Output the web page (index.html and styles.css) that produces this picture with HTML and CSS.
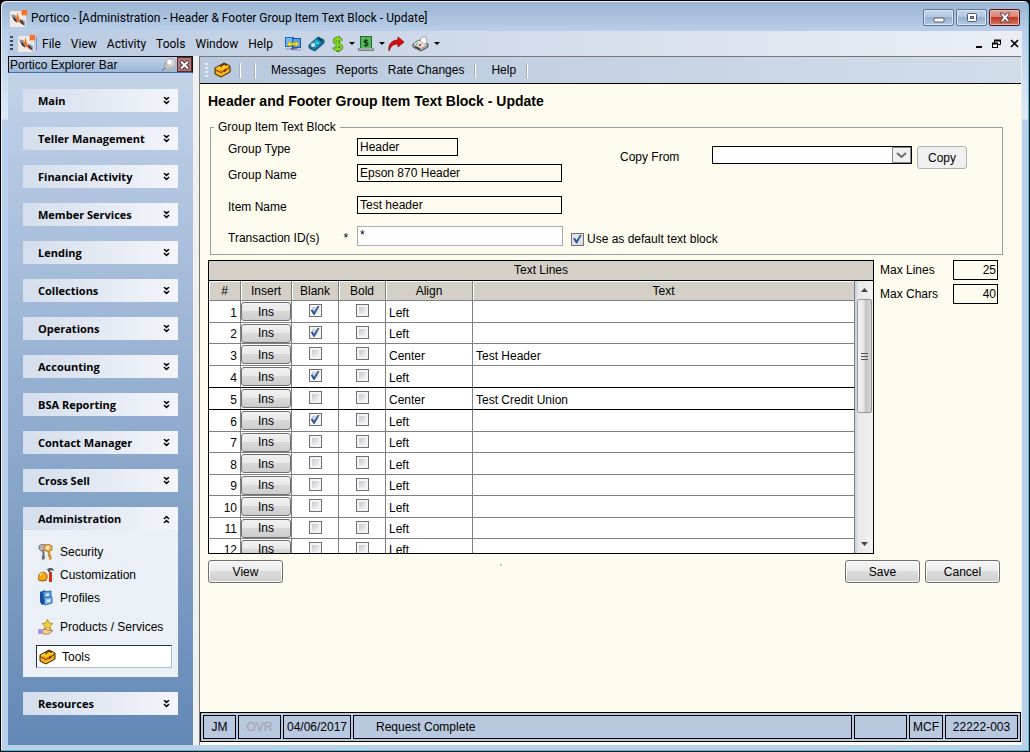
FILE: index.html
```html
<!DOCTYPE html>
<html lang="en">
<head>
<meta charset="utf-8">
<title>Portico</title>
<link rel="stylesheet" href="styles.css">
</head>
<body>
<svg class="defs" aria-hidden="true">
  <symbol id="logo" viewBox="0 0 16 16">
    <rect x="0" y="1" width="15" height="15" rx="1" fill="#efe9e7"/>
    <path d="M1 4l4 1 2 3-1 2-3-2zM9 8l5 2v4l-4-1z" fill="#8b8f99"/>
    <path d="M2 6l4 3 1 3-3-2zM9 9l3 2 2 4-4-3z" fill="#2c303a"/>
    <path d="M7 2l1 4 1 4 3 4-4-3-1 0-3-4 2 1z" fill="#f36a1c"/>
    <rect x="11" y="0" width="5" height="5" fill="#f9701e"/>
  </symbol>
  <symbol id="toolbox" viewBox="0 0 17 16">
    <path d="M1 6l9-5 6 3v6l-9 5-6-3z" fill="#f5a50f" stroke="#3a2300"/>
    <path d="M2 6l8-4 5 2-8 4z" fill="#ffcb32"/>
    <path d="M1.500 8l5.500 2.500 8.500-5" fill="none" stroke="#6b3d00"/>
    <path d="M7 5.500V4l4-2 1 .5V4" fill="none" stroke="#5a3200" stroke-width="1.300"/>
    <path d="M2 10.500l5 2.500M8 13l7-4" stroke="#ffbe2b"/>
    <path d="M10 8l2-1v2l-2 1z" fill="#4a2b00"/>
  </symbol>
  <symbol id="chev" viewBox="0 0 7 8">
    <path d="M1 0l2.500 2.500L6 0M1 4l2.500 2.500L6 4" fill="none" stroke="#000" stroke-width="1.500"/>
  </symbol>
</svg>
<div class="window">
  <header class="titlebar">
    <svg class="ico16"><use href="#logo"/></svg>
    <span class="title">Portico - [Administration - Header &amp; Footer Group Item Text Block - Update]</span>
    <div class="winbtns">
      <button type="button" class="winbtn" aria-label="Minimize"><svg width="12" height="12" viewBox="0 0 12 12"><rect x="1" y="6" width="10" height="4" rx="1" fill="#fff" stroke="#4c5874"/></svg></button>
      <button type="button" class="winbtn" aria-label="Maximize"><svg width="12" height="12" viewBox="0 0 12 12"><rect x="1.500" y="1.500" width="9" height="8" rx="1" fill="#fff" stroke="#4c5874"/><rect x="4.500" y="4.500" width="3" height="2" fill="#8fa9cc" stroke="#4c5874"/></svg></button>
      <button type="button" class="winbtn close" aria-label="Close"><svg width="12" height="12" viewBox="0 0 12 12"><path d="M1 1h3l2 2.500L8 1h3L8 5.500 11 10H8L6 7.500 4 10H1l3-4.500z" fill="#fff" stroke="#5b3b46"/></svg></button>
    </div>
  </header>

  <nav class="menubar">
    <i class="grip dark"></i>
    <svg class="ico16"><use href="#logo"/></svg>
    <i class="menu-sep"></i>
    <button type="button">File</button>
    <button type="button">View</button>
    <button type="button">Activity</button>
    <button type="button">Tools</button>
    <button type="button">Window</button>
    <button type="button">Help</button>
    <div class="icons">
      <button type="button" aria-label="Transfer"><svg width="16" height="16" viewBox="0 0 16 16">
        <rect x=".5" y="1.500" width="8" height="9" fill="#69b5fa" stroke="#2465b8"/><rect x="7.500" y="2.500" width="8" height="9" fill="#4f9cf0" stroke="#24559c"/>
        <path d="M4 12h8v2H4z" fill="#6a5fb0"/><path d="M1 12h5v2H1zM9 13h7v2H9z" fill="#a9b0c8"/>
        <path d="M2 8l3.500-3v2h5V5L14 8l-3.500 3V9h-5v2z" fill="#ffe100" stroke="#b89b1c" stroke-width=".5"/></svg></button>
      <button type="button" aria-label="Calculator"><svg width="17" height="16" viewBox="0 0 17 16">
        <path d="M1 9l9-8 6 3v3l-9 8-6-3z" fill="#117297" stroke="#07516f"/><path d="M2 9l8-7 5 2-8 8z" fill="#1ba6cf"/>
        <path d="M9 3l2-1 4 2-2 2z" fill="#073c5c"/><circle cx="5" cy="9" r="2" fill="#f3d3ee"/><path d="M8 7l1-1M10 8l1-1" stroke="#b6ecfa"/></svg></button>
      <button type="button" aria-label="Cash"><svg width="12" height="16" viewBox="0 0 12 16">
        <path d="M9.500 5C8 2 2.500 2 2.500 5s7 3 7 6-6 3-8 0M6 0v16" fill="none" stroke="#4b7d17" stroke-width="3.500"/>
        <path d="M9.500 5C8 2 2.500 2 2.500 5s7 3 7 6-6 3-8 0M5.500 0v15" fill="none" stroke="#84d824" stroke-width="2"/></svg><i class="caret"></i></button>
      <button type="button" aria-label="Checks"><svg width="16" height="16" viewBox="0 0 16 16">
        <rect x="2.500" y=".5" width="11" height="12" fill="#58b55b" stroke="#246b32"/><path d="M0 12h16v3H0z" fill="#7b827f"/><path d="M1 13h14" stroke="#ccd1d1"/>
        <path d="M10 4.500H7.500Q6 4.500 6 5.500t2 1T10 8 8.500 9.500H6M8 3v8" fill="none" stroke="#063b12" stroke-width="1.200"/></svg><i class="caret"></i></button>
      <button type="button" aria-label="Forward"><svg width="17" height="16" viewBox="0 0 17 16">
        <path d="M1 15C0 8 4 4 10 4V1l6 5-6 5V8C5 8 3 10 1 15z" fill="#d90d12" stroke="#8b0709" stroke-width=".8"/></svg></button>
      <button type="button" aria-label="Print"><svg width="17" height="16" viewBox="0 0 17 16">
        <path d="M1 8l6-4 9 4v3l-7 4-8-4z" fill="#a9a9a4" stroke="#4e4e4e"/><path d="M1.500 8L7 4.500 15 8l-6 4z" fill="#e6e6e2"/>
        <path d="M8 5l2-4h4l1 6-3 1z" fill="#fff" stroke="#777" stroke-width=".6"/><path d="M3 10l5 2.500v1.500l-5-2.500z" fill="#333"/><path d="M4 8.500l2-1" stroke="#2b2"/><path d="M7 9.500l2-1" stroke="#e11" stroke-width="1.500"/></svg><i class="caret"></i></button>
    </div>
    <div class="mdi">
      <button type="button" aria-label="Minimize document"><svg width="8" height="10" viewBox="0 0 8 10"><path d="M1 8h6" stroke="#000" stroke-width="2"/></svg></button>
      <button type="button" aria-label="Restore document"><svg width="9" height="10" viewBox="0 0 9 10"><path d="M2.500 4V1.500h6v4H6" fill="none" stroke="#000"/><path d="M2 1.500h7" stroke="#000" stroke-width="2"/><rect x=".5" y="4.500" width="5" height="4" fill="#fff" stroke="#000"/><path d="M0 4.500h6" stroke="#000" stroke-width="2"/></svg></button>
      <button type="button" aria-label="Close document"><svg width="9" height="10" viewBox="0 0 9 10"><path d="M1 1l7 7M8 1L1 8" stroke="#000" stroke-width="1.700"/></svg></button>
    </div>
  </nav>

  <div class="workspace">
    <aside class="explorer">
      <div class="explorer-head">
        <span>Portico Explorer Bar</span>
        <svg width="15" height="14" viewBox="0 0 15 14"><path d="M1 13l4-4" stroke="#888" stroke-width="1.500"/><path d="M3 6l3-1 5 5-1 2q-6 0-7-6z" fill="#c9c9c9" stroke="#a2a2a2"/><circle cx="10" cy="5" r="4.500" fill="#d3d3d3" stroke="#b0b0b0"/><circle cx="8.500" cy="4" r="2.200" fill="#fff"/></svg>
        <button type="button" class="explorer-close" aria-label="Close explorer bar"><svg width="11" height="10" viewBox="0 0 11 10"><path d="M1.500 1l8 8M9.500 1l-8 8" stroke="#54363c" stroke-width="4"/><path d="M2 1.500l7 7M9 1.500l-7 7" stroke="#fff" stroke-width="2"/></svg></button>
      </div>
      <div class="groups">
        <button type="button" class="group">Main<svg><use href="#chev"/></svg></button>
        <button type="button" class="group">Teller Management<svg><use href="#chev"/></svg></button>
        <button type="button" class="group">Financial Activity<svg><use href="#chev"/></svg></button>
        <button type="button" class="group">Member Services<svg><use href="#chev"/></svg></button>
        <button type="button" class="group">Lending<svg><use href="#chev"/></svg></button>
        <button type="button" class="group">Collections<svg><use href="#chev"/></svg></button>
        <button type="button" class="group">Operations<svg><use href="#chev"/></svg></button>
        <button type="button" class="group">Accounting<svg><use href="#chev"/></svg></button>
        <button type="button" class="group">BSA Reporting<svg><use href="#chev"/></svg></button>
        <button type="button" class="group">Contact Manager<svg><use href="#chev"/></svg></button>
        <button type="button" class="group">Cross Sell<svg><use href="#chev"/></svg></button>
        <div class="open-group">
          <button type="button" class="group open">Administration<svg><use href="#chev"/></svg></button>
          <div class="links">
            <a href="#security"><svg viewBox="0 0 16 16"><path d="M5 5l1 10M6 12l-2 1M6 14l-2 1" stroke="#6c6c6c" stroke-width="2"/><path d="M1 2l3-2 4 1-1 5-4 1-2-2z" fill="#b5b5b5" stroke="#777"/><path d="M10 6l3 9M12 11l-2 1M13 14l-2 1" stroke="#d08a2a" stroke-width="2"/><path d="M6 2l4-2 4 2v4l-4 2-4-2z" fill="#f0b45a" stroke="#b97923"/><path d="M8 3l3-1v2L8 5z" fill="#fff"/></svg>Security</a>
            <a href="#customization"><svg viewBox="0 0 16 16"><path d="M0 12q0-6 5-7 5 1 4 6 0 3-4 3-5 0-5-2z" fill="#f8a30f" stroke="#7b4a05" stroke-width=".8"/><path d="M2 9q1-3 3-3" stroke="#ffe16b" stroke-width="1.500" fill="none"/><path d="M8 3l3-2h3l2 2-1 1-2-1-1 2h-2V3z" fill="#555d68"/><path d="M12.500 5v10" stroke="#d7320f" stroke-width="3"/></svg>Customization</a>
            <a href="#profiles"><svg viewBox="0 0 16 16"><path d="M2 2l5-2v14l-3 1-2-3z" fill="#174f9f"/><path d="M5 2l8-1v7l-7 1z" fill="#63a2e8" stroke="#2c67b5"/><path d="M6 8l8-1v6l-7 2z" fill="#88bdf2" stroke="#2c67b5"/><path d="M8 4l3-.5v2L8 6zM9 10l3-.5v2l-3 .5z" fill="#f4f9ff"/></svg>Profiles</a>
            <a href="#products" class="spaced"><svg viewBox="0 0 16 16"><path d="M9.500 0L11 4l4 .5-3 2.500 1 4-3.500-2.500L6 11l1-4-3-2.500L8 4z" fill="#f5cf35" stroke="#a88516" stroke-width=".8"/><path d="M4 11l4-1 2 1.500h5L11 15H5z" fill="#f6cf9c" stroke="#a86c38" stroke-width=".8"/><path d="M0 10h4v5H0z" fill="#a595e6"/></svg>Products / Services</a>
            <a href="#tools" class="current"><svg viewBox="0 0 17 16"><use href="#toolbox"/></svg>Tools</a>
          </div>
        </div>
        <button type="button" class="group">Resources<svg><use href="#chev"/></svg></button>
      </div>
    </aside>

    <main class="main">
      <nav class="toolbar">
        <i class="grip"></i>
        <button type="button" class="tb-icon" aria-label="Toolbox"><svg width="17" height="16"><use href="#toolbox"/></svg></button>
        <i class="tb-sep"></i><i class="tb-sep"></i>
        <button type="button">Messages</button>
        <button type="button">Reports</button>
        <button type="button">Rate Changes</button>
        <i class="tb-sep"></i>
        <button type="button">Help</button>
        <i class="tb-sep"></i>
      </nav>

      <form class="content">
        <h1>Header and Footer Group Item Text Block - Update</h1>
        <fieldset>
          <legend>Group Item Text Block</legend>
          <div class="fieldset-body">
            <div class="fields">
              <div class="field"><label for="gtype">Group Type</label><input id="gtype" class="box short" readonly value="Header"></div>
              <div class="field"><label for="gname">Group Name</label><input id="gname" class="box" readonly value="Epson 870 Header"></div>
              <div class="field apart"><label for="iname">Item Name</label><input id="iname" class="box" readonly value="Test header"></div>
              <div class="field last"><label for="tid">Transaction ID(s)<span class="req">*</span></label><input id="tid" class="edit" value="*">
                <label class="default"><input type="checkbox" class="check" checked>Use as default text block</label></div>
            </div>
            <div class="copy">
              <label for="copyfrom">Copy From</label>
              <span class="select"><select id="copyfrom"><option></option></select><i><svg width="11" height="7" viewBox="0 0 11 7"><path d="M1 1l4.500 4L10 1" fill="none" stroke="#6b6b6b" stroke-width="2"/></svg></i></span>
              <button type="button" class="btn flat">Copy</button>
            </div>
          </div>
        </fieldset>

        <div class="lines">
          <section class="grid">
            <h2>Text Lines</h2>
            <div class="grid-body">
              <div class="grid-view">
                <table>
                  <colgroup><col class="c-num"><col class="c-ins"><col class="c-chk"><col class="c-chk"><col class="c-align"><col></colgroup>
                  <thead><tr><th>#</th><th>Insert</th><th>Blank</th><th>Bold</th><th>Align</th><th>Text</th></tr></thead>
                  <tbody>
                    <tr><td>1</td><td><button type="button">Ins</button></td><td><input type="checkbox" class="check" aria-label="Blank 1" checked></td><td><input type="checkbox" class="check" aria-label="Bold 1"></td><td>Left</td><td></td></tr>
                    <tr class="low"><td>2</td><td><button type="button">Ins</button></td><td><input type="checkbox" class="check" aria-label="Blank 2" checked></td><td><input type="checkbox" class="check" aria-label="Bold 2"></td><td>Left</td><td></td></tr>
                    <tr><td>3</td><td><button type="button">Ins</button></td><td><input type="checkbox" class="check" aria-label="Blank 3"></td><td><input type="checkbox" class="check" aria-label="Bold 3"></td><td>Center</td><td>Test Header</td></tr>
                    <tr class="before"><td>4</td><td><button type="button">Ins</button></td><td><input type="checkbox" class="check" aria-label="Blank 4" checked></td><td><input type="checkbox" class="check" aria-label="Bold 4"></td><td>Left</td><td></td></tr>
                    <tr class="active"><td>5</td><td><button type="button">Ins</button></td><td><input type="checkbox" class="check" aria-label="Blank 5"></td><td><input type="checkbox" class="check" aria-label="Bold 5"></td><td>Center</td><td>Test Credit Union</td></tr>
                    <tr><td>6</td><td><button type="button">Ins</button></td><td><input type="checkbox" class="check" aria-label="Blank 6" checked></td><td><input type="checkbox" class="check" aria-label="Bold 6"></td><td>Left</td><td></td></tr>
                    <tr class="low"><td>7</td><td><button type="button">Ins</button></td><td><input type="checkbox" class="check" aria-label="Blank 7"></td><td><input type="checkbox" class="check" aria-label="Bold 7"></td><td>Left</td><td></td></tr>
                    <tr><td>8</td><td><button type="button">Ins</button></td><td><input type="checkbox" class="check" aria-label="Blank 8"></td><td><input type="checkbox" class="check" aria-label="Bold 8"></td><td>Left</td><td></td></tr>
                    <tr class="low"><td>9</td><td><button type="button">Ins</button></td><td><input type="checkbox" class="check" aria-label="Blank 9"></td><td><input type="checkbox" class="check" aria-label="Bold 9"></td><td>Left</td><td></td></tr>
                    <tr><td>10</td><td><button type="button">Ins</button></td><td><input type="checkbox" class="check" aria-label="Blank 10"></td><td><input type="checkbox" class="check" aria-label="Bold 10"></td><td>Left</td><td></td></tr>
                    <tr class="low"><td>11</td><td><button type="button">Ins</button></td><td><input type="checkbox" class="check" aria-label="Blank 11"></td><td><input type="checkbox" class="check" aria-label="Bold 11"></td><td>Left</td><td></td></tr>
                    <tr class="low"><td>12</td><td><button type="button">Ins</button></td><td><input type="checkbox" class="check" aria-label="Blank 12"></td><td><input type="checkbox" class="check" aria-label="Bold 12"></td><td>Left</td><td></td></tr>
                  </tbody>
                </table>
              </div>
              <div class="scroll">
                <button type="button" class="arrow" aria-label="Scroll up"><svg width="7" height="4" viewBox="0 0 7 4"><path d="M0 4l3.500-4L7 4z" fill="#444"/></svg></button>
                <div class="thumb"><i></i><i></i><i></i></div>
                <button type="button" class="arrow end" aria-label="Scroll down"><svg width="7" height="4" viewBox="0 0 7 4"><path d="M0 0l3.500 4L7 0z" fill="#444"/></svg></button>
              </div>
            </div>
          </section>
          <div class="limits">
            <label>Max Lines<input class="num" readonly value="25"></label>
            <label>Max Chars<input class="num" readonly value="40"></label>
          </div>
        </div>

        <div class="actions">
          <button type="button" class="btn">View</button>
          <i class="speck"></i>
          <button type="button" class="btn">Save</button>
          <button type="button" class="btn">Cancel</button>
        </div>
      </form>

      <footer class="status">
        <span class="s-user">JM</span><span class="s-ovr">OVR</span><span class="s-date">04/06/2017</span><span class="s-msg">Request Complete</span><span class="s-empty"></span><span class="s-mcf">MCF</span><span class="s-id">22222-003</span>
      </footer>
    </main>
  </div>
</div>
</body>
</html>
```

FILE: styles.css
```css
* { box-sizing: border-box; }
body { margin: 0; background: #000; color: #000; font: 12px/14px "Liberation Sans", Arial, sans-serif; }
button, input, select { font: inherit; color: inherit; margin: 0; padding: 0; }
button { border: 0; background: none; white-space: nowrap; }
svg { display: block; flex: none; }
.defs { position: absolute; width: 0; height: 0; }
.ico16 { width: 17px; height: 17px; }

.window {
  min-height: 100vh;
  display: flex;
  flex-direction: column;
  border: 1px solid #000;
  border-radius: 6px 6px 0 0;
  padding: 0 7px 6px 7px;
  background: linear-gradient(#9ab4d1, #b9cfea 30px, #dfeaf6 118px, #b9d0ea 119px, #b9d0ea);
  box-shadow: inset -1px -1px #1fd3ee, inset 1px 1px #e8f2fc;
}

.titlebar { display: flex; align-items: center; height: 30px; padding: 4px 2px 0 2px; font-family: Roboto, "Noto Sans", sans-serif; }
.title { flex: 1; margin-left: 4px; white-space: nowrap; font-size: 12px; }
.winbtns { display: flex; gap: 2px; padding-bottom: 1px; }
.winbtn {
  width: 31px; height: 17px;
  display: flex; align-items: center; justify-content: center;
  border: 1px solid #5f7596; border-radius: 2px;
  background: linear-gradient(#c5d7ec, #b2c8e0 48%, #94afce 50%, #b4cde6);
  box-shadow: inset 0 0 0 1px #d9e6f4;
}
.winbtn.close { border-color: #4b1722; background: linear-gradient(#e7a99c, #d67f6f 48%, #b93a25 50%, #d87860); box-shadow: inset 0 0 0 1px #e9b5aa; }

.menubar {
  display: flex; align-items: center; height: 25px;
  background: linear-gradient(90deg, #b9cae1, #d2dcea 50%, #ebeef5);
  font-family: Roboto, "Noto Sans", sans-serif;
}
.menubar > button { margin-right: 10px; }
.grip { width: 3px; height: 15px; background: repeating-linear-gradient(#e9e9ec 0 2px, transparent 2px 4px); }
.grip.dark { margin: 0 5px 0 2px; background: repeating-linear-gradient(#39496b 0 2px, transparent 2px 4px); }
.menu-sep { width: 1px; height: 13px; margin: 0 5px 0 1px; background: #6f9bdc; }
.icons { display: flex; align-items: center; gap: 7px; margin-left: 2px; }
.icons button { display: flex; align-items: center; gap: 5px; }
.caret { margin-right: -4px; border: 3px solid transparent; border-top-color: #000; border-bottom: 0; }
.mdi { display: flex; gap: 9px; margin: 0 3px 0 auto; }

.workspace { flex: 1; display: flex; gap: 6px; background: #f0f0f0; }

.explorer { width: 185px; flex: none; display: flex; flex-direction: column; background: linear-gradient(#c4d4ea, #6388b6); }
.explorer-head {
  display: flex; align-items: center; height: 17px;
  border: 1px solid #111; border-bottom: 1px solid #4273aa;
  background: linear-gradient(#bed0e6, #9cb7d6);
}
.explorer-head span { flex: 1; font-size: 12px; padding-left: 1px; }
.explorer-close { width: 15px; height: 15px; margin-left: 1px; display: flex; align-items: center; justify-content: center; background: #b4776f; border: 1px solid #542b33; }
.groups { display: flex; flex-direction: column; gap: 15px; padding: 16px 15px 0; }
.group {
  display: flex; align-items: center; justify-content: space-between;
  width: 100%; height: 23px; padding: 0 8px 0 15px;
  background: linear-gradient(90deg, #d4deec, #f3f5fa);
  font: bold 11px/14px "Open Sans", "Noto Sans", sans-serif; text-align: left;
}
.group svg { width: 7px; height: 8px; }
.group.open svg { transform: rotate(180deg); }
.open-group { background: #eaf0f5; padding-bottom: 9px; }
.links { display: flex; flex-direction: column; padding: 10px 6px 0 13px; }
.links a { display: flex; align-items: center; height: 23px; padding-left: 2px; color: #000; text-decoration: none; font-size: 12px; }
.links svg { width: 16px; height: 16px; margin-right: 6px; }
.links .spaced { margin: 6px 0 7px; }
.links .current { border: 1px solid #22303c; border-right-color: #a9bdd6; border-bottom-color: #a9bdd6; background: #fff; }
.links .current svg { width: 17px; }

.main { flex: 1; min-width: 0; display: flex; flex-direction: column; margin-right: 1px; border: solid #777; border-width: 1px 0 0 1px; background: #fffbef; }
.toolbar { display: flex; align-items: center; height: 27px; padding-left: 5px; border-bottom: 1px solid #000; background: linear-gradient(90deg, #b8c8de, #d1dde9); }
.toolbar button { margin-right: 10px; }
.toolbar .tb-icon { margin: 0 8px 0 6px; }
.tb-sep { width: 2px; height: 15px; margin-right: 15px; border-left: 1px solid #a3acba; border-right: 1px solid #fff; }
.tb-sep + .tb-sep { margin-left: -2px; }

.content { flex: 1; padding: 9px 18px 0 8px; }
h1 { margin: 0 0 11px; font-size: 14px; line-height: 16px; }
fieldset { margin: 0 0 5px 2px; padding: 4px 35px 8px 17px; border: 1px solid #9d9da1; min-width: 0; }
legend { margin-left: -14px; padding: 0 4px; }
.fieldset-body { display: grid; grid-template-columns: minmax(0, 1fr) auto; }
.field { display: flex; align-items: center; height: 18px; margin-bottom: 8px; white-space: nowrap; }
.field > label:first-child { flex: none; width: 129px; padding-top: 4px; }
.field.apart { margin-top: 14px; margin-bottom: 12px; }
.field.last { height: 20px; margin: 0; }
.req { margin-left: 24px; }
.box { flex: none; width: 205px; height: 18px; padding: 0 2px; border: 1px solid #000; background: #fffbef; }
.box.short { width: 101px; }
.edit { flex: none; width: 206px; height: 20px; padding: 0 2px 2px; border: 1px solid #abadb3; background: #fff; }
.default { display: flex; align-items: center; gap: 3px; padding: 6px 0 0 8px; }
.copy { display: flex; align-items: flex-start; padding-top: 8px; white-space: nowrap; }
.copy label { width: 92px; padding-top: 4px; }
.select { position: relative; width: 200px; height: 18px; margin-right: 5px; }
.select select { width: 100%; height: 100%; appearance: none; border: 1px solid #000; border-radius: 0; background: #fff; }
.select i { position: absolute; top: 1px; right: 1px; bottom: 1px; width: 19px; display: flex; align-items: center; justify-content: center; border: 1px solid #8a8a8a; background: #f0f0f0; pointer-events: none; }

.check { appearance: none; position: relative; flex: none; width: 13px; height: 13px; border: 1px solid #707070; background: linear-gradient(135deg, #b4bcc8, #f4f4f4 80%); box-shadow: inset 0 0 0 2px #f4f4f4; }
.default .check { background: #dfe2e8; box-shadow: none; }
.check:checked::after { content: ""; position: absolute; inset: 1px; background: #35578f; clip-path: polygon(0 45%, 22% 38%, 40% 65%, 80% 0, 100% 0, 45% 100%, 35% 100%); }

.btn { width: 75px; height: 23px; border: 1px solid #707070; border-radius: 3px; background: linear-gradient(#f3f3f3, #ebebeb 48%, #dcdcdc 50%, #cecece); box-shadow: inset 0 0 0 1px #fbfbfb; }
.btn.flat { width: 50px; border-color: #adb2b5; background: #f0f0f0; box-shadow: none; }

.lines { display: flex; gap: 6px; }
.grid { flex: 1; min-width: 0; border: 1px solid #000; background: #fff; }
.grid h2 { margin: 0; height: 20px; font-weight: normal; font-size: 12px; line-height: 19px; text-align: center; background: #d4d0c8; border-bottom: 1px solid #000; }
.grid-body { display: flex; height: 272px; overflow: hidden; }
.grid-view { flex: 1; min-width: 0; overflow: hidden; }
table { width: 100%; table-layout: fixed; border-collapse: separate; border-spacing: 0; }
.c-num { width: 32px; }
.c-ins { width: 51px; }
.c-chk { width: 47px; }
.c-align { width: 87px; }
th { height: 20px; padding: 0; font-weight: normal; background: #d4d0c8; border: solid #808080; border-width: 0 1px 1px 0; box-shadow: inset 1px 1px #fff; }
td { height: 22px; padding: 2px 3px 0; border: solid #808080; border-width: 0 1px 1px 0; white-space: nowrap; overflow: hidden; }
.low td { height: 21px; }
td:first-child { text-align: right; }
td:nth-child(2) { padding: 0; }
td:nth-child(3), td:nth-child(4) { padding: 3px 0 0; text-align: center; vertical-align: top; }
td .check { display: block; margin: 0 auto; }
td button { display: block; width: 50px; height: 19px; border: 1px solid #707070; border-radius: 3px; background: linear-gradient(#f2f2f2, #e8e8e8 48%, #d9d9d9 50%, #cdcdcd); }
.before td, .active td { border-bottom-color: #000; }
.scroll { width: 18px; display: flex; flex-direction: column; padding: 0 1px 0 2px; background: linear-gradient(90deg, #c5d3e3 1px, #e8e8e8 3px, #f1f1f1); }
.arrow { height: 18px; display: flex; align-items: center; justify-content: center; }
.arrow.end { margin-top: auto; }
.thumb { height: 114px; display: flex; flex-direction: column; align-items: center; justify-content: center; gap: 2px; border: 1px solid #959595; border-radius: 2px; background: linear-gradient(90deg, #f4f4f4, #e4e4e4 45%, #c5c5c9 60%, #d6d6d6); }
.thumb i { width: 7px; height: 1px; background: #555; }
.limits { flex: none; width: 123px; display: flex; flex-direction: column; gap: 4px; }
.limits label { display: flex; align-items: center; justify-content: space-between; }
.num { width: 45px; height: 20px; margin-right: 5px; padding: 0 1px; border: 1px solid #000; background: #fffbef; text-align: right; }

.actions { display: flex; gap: 5px; padding: 6px 3px 0 0; }
.speck { width: 2px; height: 2px; margin: 4px auto 0 212px; background: #c8c8c8; }

.status { display: flex; gap: 2px; height: 30px; padding: 2px; margin-bottom: 3px; border: 1px solid #000; background: #b8c8de; }
.status span { display: flex; align-items: center; justify-content: center; border: 1px solid #000; }
.s-user { width: 33px; }
.s-ovr { width: 43px; color: #a3a3a3; }
.s-date { width: 68px; }
.status .s-msg { flex: 1; justify-content: flex-start; padding-left: 22px; }
.s-empty { width: 53px; }
.s-mcf { width: 34px; }
.s-id { width: 73px; }
```
